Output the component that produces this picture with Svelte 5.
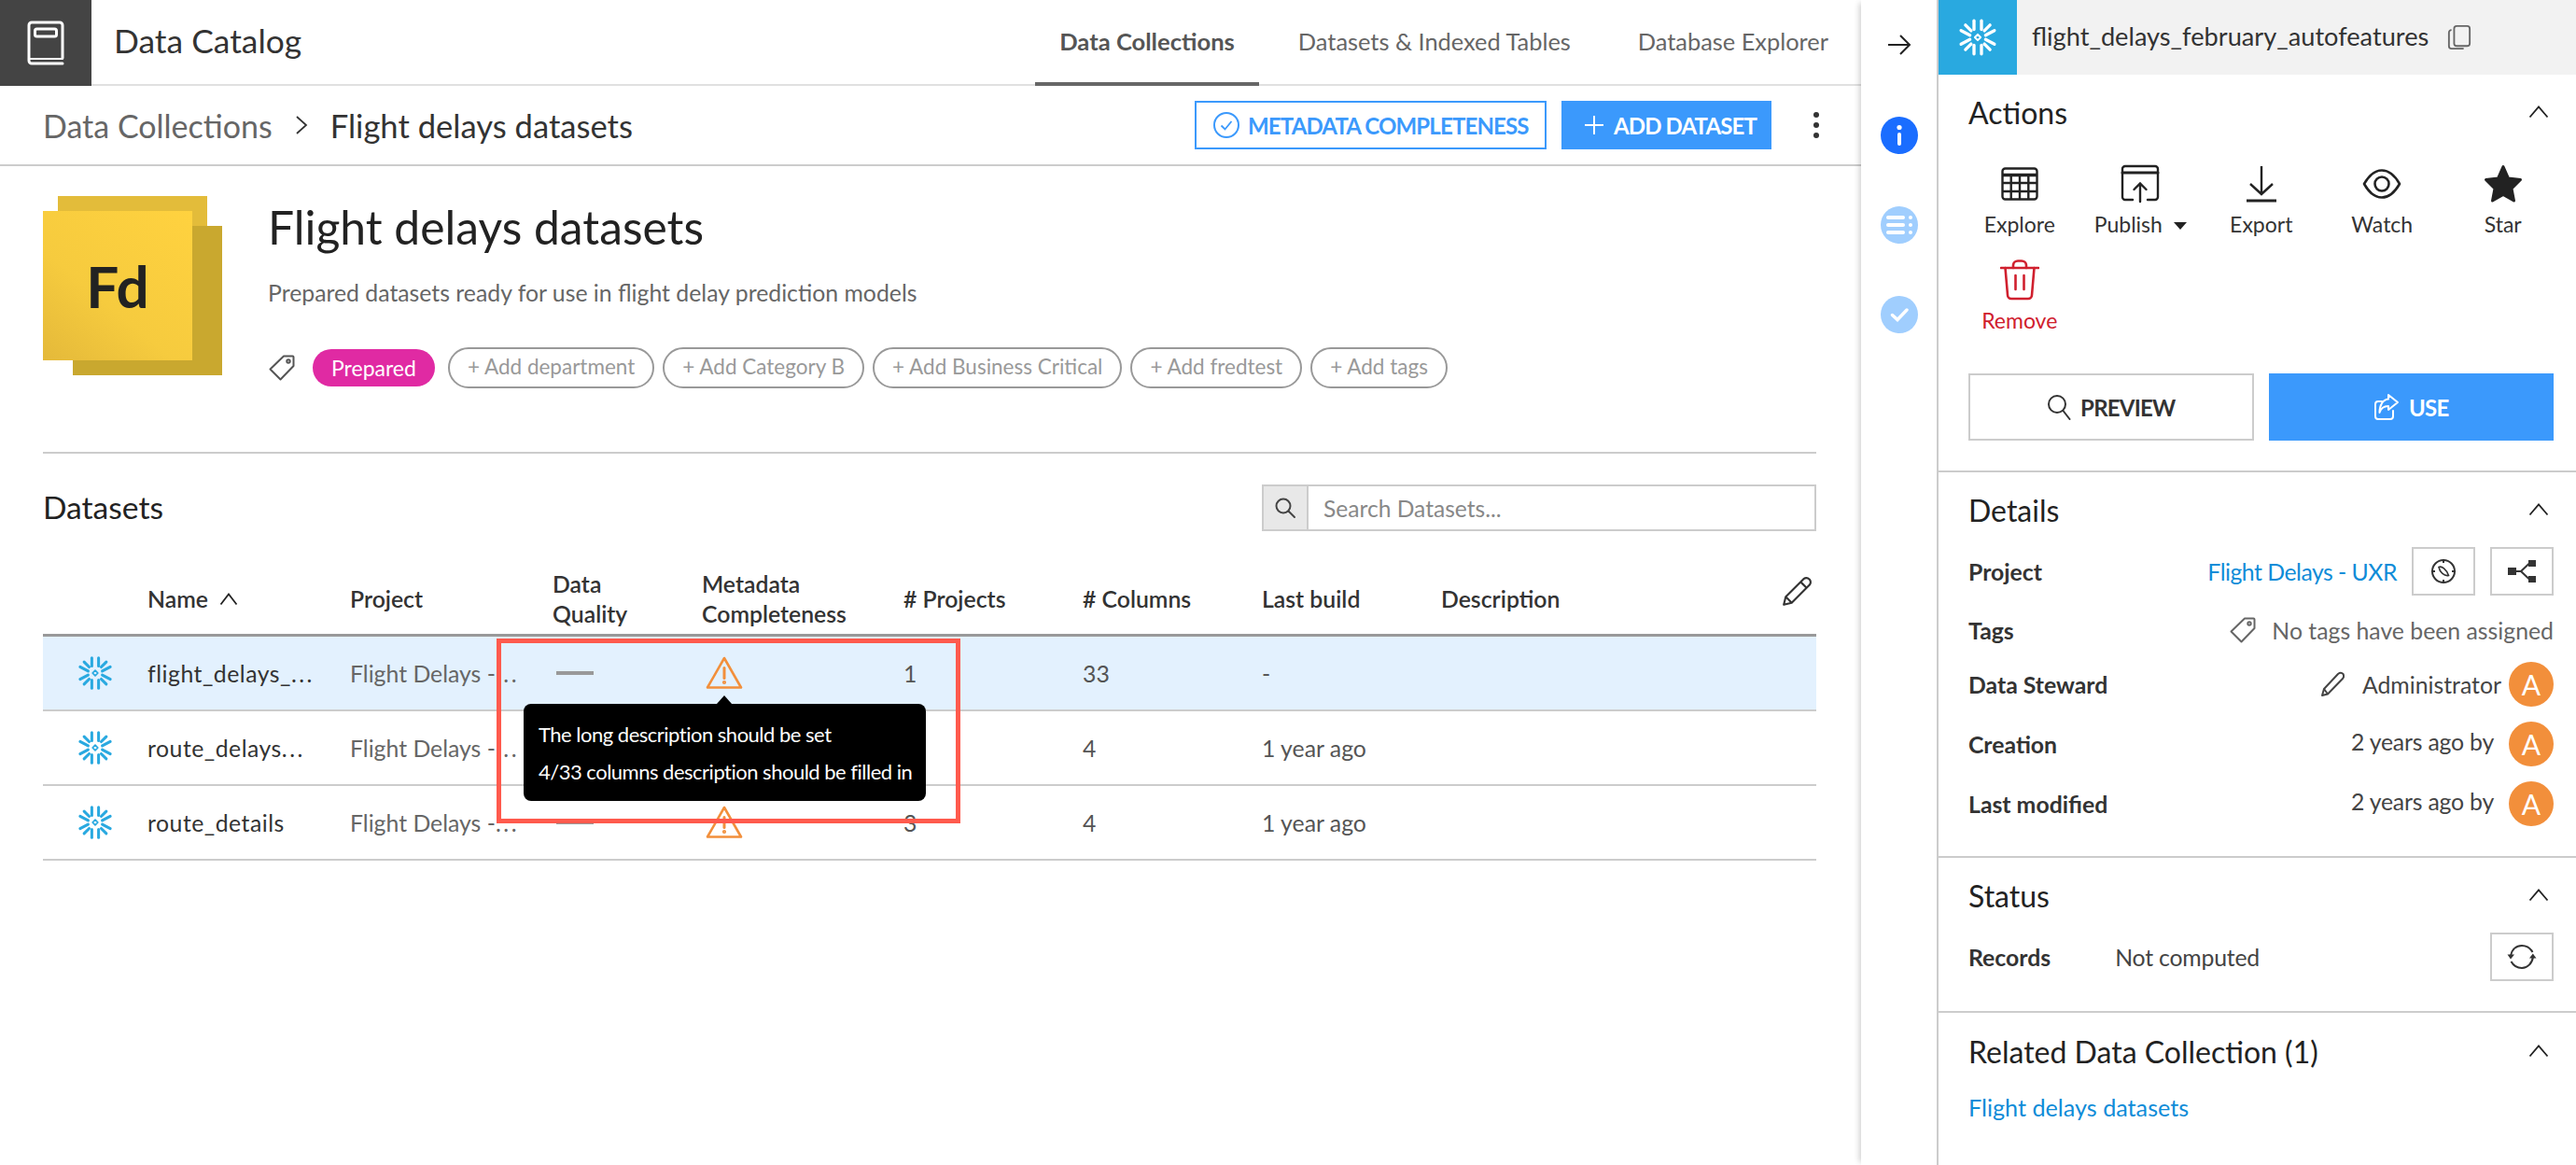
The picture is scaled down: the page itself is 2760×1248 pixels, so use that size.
<script>
  const tags = ['+ Add department', '+ Add Category B', '+ Add Business Critical', '+ Add fredtest', '+ Add tags'];
  const rows = [
    { name: 'flight_delays_', dots: true, projects: '1', columns: '33', build: '-', active: true },
    { name: 'route_delays', dots: true, projects: '2', columns: '4', build: '1 year ago' },
    { name: 'route_details', projects: '3', columns: '4', build: '1 year ago' }
  ];
  const quads = ['scale(1 1)', 'scale(-1 1)', 'scale(1 -1)', 'scale(-1 -1)'];
</script>

{#snippet snow(size, color)}
  <svg class="snow" width={size} height={size} viewBox="-20 -20 40 40" fill="none" stroke={color} stroke-width="3.200" stroke-linecap="round" stroke-linejoin="round">
    {#each quads as q}
      <g transform={q}>
        <path d="M-3.800 -17V-8" />
        <path d="M-12.500 -12.500L-6.800 -6.800" />
        <path d="M-17 -7L-8 -2.200" />
      </g>
    {/each}
    <path d="M0 -3L3 0L0 3L-3 0Z" stroke-width="1.800" />
  </svg>
{/snippet}

{#snippet warn()}
  <svg class="warn" width="40" height="36" viewBox="0 0 40 36" fill="none" stroke="#f28f3b" stroke-width="2.600" stroke-linejoin="round" stroke-linecap="round">
    <path d="M20 2L38 33.500H2Z" />
    <path d="M20 12.500V23.500" stroke-width="3" />
    <circle cx="20" cy="28" r="0.800" fill="#f28f3b" />
  </svg>
{/snippet}

{#snippet chevron()}
  <svg class="chev" width="22" height="14" viewBox="0 0 22 14" fill="none" stroke="#222" stroke-width="1.800"><path d="M1.500 12.500L11 1.500L20.500 12.500" /></svg>
{/snippet}

{#snippet tag(color)}
  <svg width="30" height="30" viewBox="0 0 30 30" fill="none" stroke={color} stroke-width="2" stroke-linejoin="round">
    <path d="M17 2.500H26.500a1 1 0 0 1 1 1V13L13.500 27.500L2.500 16.500Z" />
    <circle cx="22" cy="8" r="1.700" />
  </svg>
{/snippet}

{#snippet avatar()}
  <span class="avatar">A</span>
{/snippet}

<div class="app">
  <main class="main">
    <header class="topbar">
      <div class="brand">
        <svg width="40" height="48" viewBox="0 0 40 48" fill="none" stroke="#fff" stroke-width="3" stroke-linecap="round">
          <path d="M38 40V5a3 3 0 0 0-3-3H5a3 3 0 0 0-3 3v38a3 3 0 0 0 3 3H38" />
          <path d="M2.500 41H38" stroke-width="2" />
          <rect x="8.500" y="9" width="23" height="8" rx="2" />
        </svg>
      </div>
      <h1 class="app-title">Data Catalog</h1>
      <nav class="tabs">
        <span class="tab on">Data Collections</span>
        <span class="tab">Datasets &amp; Indexed Tables</span>
        <span class="tab">Database Explorer</span>
      </nav>
    </header>

    <div class="crumbs">
      <span class="crumb-a">Data Collections</span>
      <svg class="crumb-sep" width="14" height="22" viewBox="0 0 14 22" fill="none" stroke="#333" stroke-width="1.800"><path d="M2 2L12 11L2 20" /></svg>
      <span class="crumb-b">Flight delays datasets</span>
      <button class="btn-outline">
        <svg width="30" height="30" viewBox="0 0 30 30" fill="none" stroke="#3b99fc" stroke-width="2"><circle cx="15" cy="15" r="13" /><path d="M9.500 15.500L13.500 19.500L20.500 11" stroke-width="1.800" /></svg>
        METADATA COMPLETENESS
      </button>
      <button class="btn-solid">
        <svg width="22" height="22" viewBox="0 0 22 22" stroke="#fff" stroke-width="2"><path d="M11 1V21M1 11H21" /></svg>
        ADD DATASET
      </button>
      <span class="kebab"><i></i><i></i><i></i></span>
    </div>

    <section class="collection">
      <div class="cover">
        <div class="sheet sheet-back"></div>
        <div class="sheet sheet-low"></div>
        <div class="sheet sheet-front">Fd</div>
      </div>
      <div class="info">
        <h2 class="col-title">Flight delays datasets</h2>
        <p class="col-desc">Prepared datasets ready for use in flight delay prediction models</p>
        <div class="tags">
          {@render tag('#555')}
          <span class="pill">Prepared</span>
          {#each tags as t}
            <span class="add">{t}</span>
          {/each}
        </div>
      </div>
    </section>

    <div class="ds-bar">
      <h3 class="ds-title">Datasets</h3>
      <div class="search">
        <span class="search-addon">
          <svg width="24" height="24" viewBox="0 0 24 24" fill="none" stroke="#444" stroke-width="2" stroke-linecap="round"><circle cx="10" cy="10" r="7.500" /><path d="M15.500 15.500L22 22" /></svg>
        </span>
        <span class="search-ph">Search Datasets...</span>
      </div>
    </div>

    <div class="table">
      <div class="grid head">
        <span></span>
        <span class="name-h">Name
          <svg width="20" height="14" viewBox="0 0 20 14" fill="none" stroke="#222" stroke-width="1.800"><path d="M1.500 12.500L10 1.500L18.500 12.500" /></svg>
        </span>
        <span>Project</span>
        <span>Data<br />Quality</span>
        <span>Metadata<br />Completeness</span>
        <span># Projects</span>
        <span># Columns</span>
        <span>Last build</span>
        <span>Description</span>
        <svg class="edit" width="34" height="34" viewBox="0 0 32 32" fill="none" stroke="#333" stroke-width="2" stroke-linejoin="round"><path d="M3 29L5 21L23 3C25 1.500 27 1.500 29 3.500C30.500 5.500 30.500 7 29 9L11 27Z" /><path d="M5 21L11 27M20 6L26 12" /></svg>
      </div>
      {#each rows as r}
        <div class="grid row" class:active={r.active}>
          <span class="cell-icon">{@render snow(38, '#29a9e0')}</span>
          <span class="c-name">{r.name}{#if r.dots}<span class="dots">...</span>{/if}</span>
          <span class="c-proj">Flight Delays -<span class="dots">...</span></span>
          <span><i class="dash"></i></span>
          <span class="c-warn">{@render warn()}</span>
          <span class="c-num">{r.projects}</span>
          <span class="c-num">{r.columns}</span>
          <span class="c-num">{r.build}</span>
          <span></span>
        </div>
      {/each}
      <div class="tip">
        <p>The long description should be set</p>
        <p>4/33 columns description should be filled in</p>
      </div>
      <div class="annot"></div>
    </div>
  </main>

  <aside class="rail">
    <svg class="rail-arrow" width="26" height="24" viewBox="0 0 26 24" fill="none" stroke="#222" stroke-width="2"><path d="M1 12H24M14 2L24 12L14 22" /></svg>
    <span class="dot dot-on">
      <svg width="40" height="40" viewBox="0 0 40 40" fill="#fff"><circle cx="20" cy="11.500" r="2.600" /><rect x="18" y="17" width="4" height="14" rx="2" /></svg>
    </span>
    <span class="dot">
      <svg width="40" height="40" viewBox="0 0 40 40" fill="#fff"><rect x="6" y="10" width="20" height="4" rx="2" /><rect x="6" y="18" width="20" height="4" rx="2" /><rect x="6" y="26" width="20" height="4" rx="2" /><circle cx="32" cy="12" r="2" /><circle cx="32" cy="20" r="2" /><circle cx="32" cy="28" r="2" /></svg>
    </span>
    <span class="dot">
      <svg width="40" height="40" viewBox="0 0 40 40" fill="none" stroke="#fff" stroke-width="3.400" stroke-linecap="round"><path d="M12.500 20.500L18 25.500L28 15" /></svg>
    </span>
  </aside>

  <aside class="panel">
    <div class="p-head">
      <span class="p-logo">{@render snow(42, '#fff')}</span>
      <span class="p-name">flight_delays_february_autofeatures</span>
      <svg class="p-copy" width="26" height="30" viewBox="0 0 28 30" fill="none" stroke="#666" stroke-width="2"><rect x="8" y="2" width="18" height="23" rx="3" /><path d="M5 6.500a3 3 0 0 0-3 3V25a3 3 0 0 0 3 3H19" /></svg>
    </div>

    <section class="p-sec sec-actions">
      <div class="p-title"><span>Actions</span>{@render chevron()}</div>
      <div class="actions">
        <div class="act">
          <svg width="40" height="36" viewBox="0 0 40 36" fill="none" stroke="#222" stroke-width="2.400"><rect x="1.500" y="1.500" width="37" height="33" rx="3" /><path d="M1.500 8.500H38.500" stroke-width="3.500" /><path d="M1.500 17H38.500M1.500 26H38.500M10.700 8V35M20 8V35M29.300 8V35" /></svg>
          <span>Explore</span>
        </div>
        <div class="act">
          <svg width="42" height="42" viewBox="0 0 42 42" fill="none" stroke="#222" stroke-width="2.400" stroke-linecap="round"><path d="M13 38H5a3 3 0 0 1-3-3V5a3 3 0 0 1 3-3H37a3 3 0 0 1 3 3V35a3 3 0 0 1-3 3H29" /><path d="M2 9H40" stroke-width="3" /><path d="M21 40V21M14.500 27L21 20.500L27.500 27" /></svg>
          <span>Publish <i class="caret"></i></span>
        </div>
        <div class="act">
          <svg width="34" height="40" viewBox="0 0 34 40" fill="none" stroke="#222" stroke-width="2.400"><path d="M17 1V31M5 20L17 31L29 20" /><path d="M1 38H33" stroke-width="3" /></svg>
          <span>Export</span>
        </div>
        <div class="act">
          <svg width="42" height="32" viewBox="0 0 42 32" fill="none" stroke="#222" stroke-width="2.600" stroke-linejoin="round"><path d="M21 1.500C29 1.500 36 9 40 16C36 23 29 30.500 21 30.500C13 30.500 6 23 2 16C6 9 13 1.500 21 1.500Z" /><circle cx="21" cy="16" r="7.500" /></svg>
          <span>Watch</span>
        </div>
        <div class="act">
          <svg width="42" height="42" viewBox="0 0 42 42" fill="#222" stroke="#222" stroke-width="3" stroke-linejoin="round"><path d="M21 2.500L26.500 15L39.500 16.500L30 26L32.500 39L21 32.500L9.500 39L12 26L2.500 16.500L15.500 15Z" /></svg>
          <span>Star</span>
        </div>
        <div class="act act-red">
          <svg width="42" height="44" viewBox="0 0 42 44" fill="none" stroke="#d0202e" stroke-width="2.600" stroke-linecap="round" stroke-linejoin="round"><path d="M1 9H41" /><path d="M14 9V6a5 5 0 0 1 5-4.500h4A5 5 0 0 1 28 6V9" /><path d="M5.500 9L8 38a4 4 0 0 0 4 4H30a4 4 0 0 0 4-4L36.500 9" /><path d="M16.500 17V32M25.500 17V32" /></svg>
          <span>Remove</span>
        </div>
      </div>
      <div class="cta">
        <button class="cta-ghost">
          <svg width="26" height="28" viewBox="0 0 26 28" fill="none" stroke="#333" stroke-width="2" stroke-linecap="round"><circle cx="11" cy="11" r="9" /><path d="M17.500 18L24.500 27" /></svg>
          PREVIEW
        </button>
        <button class="cta-solid">
          <svg width="28" height="30" viewBox="0 0 28 30" fill="none" stroke="#fff" stroke-width="2" stroke-linejoin="round" stroke-linecap="round"><path d="M21 19V25a3 3 0 0 1-3 3H5a3 3 0 0 1-3-3V12a3 3 0 0 1 3-3H9" /><path d="M16 2L26 10L16 18V14C11 14 8 16 6.500 21C6.500 13 10 7 16 6.500Z" /></svg>
          USE
        </button>
      </div>
    </section>

    <section class="p-sec sec-details">
      <div class="p-title"><span>Details</span>{@render chevron()}</div>
      <div class="det det-project">
        <b>Project</b>
        <span class="link link-tight">Flight Delays - UXR</span>
        <span class="sq">
          <svg width="28" height="28" viewBox="0 0 28 28" fill="none" stroke="#333" stroke-width="2"><circle cx="14" cy="14" r="12" /><path d="M9 9.500C12 8 17 11.500 19.500 18.500C15 19.500 10 15 9 9.500Z" stroke-width="1.600" /><path d="M14 1V5M14 23V27M1 14H5M23 14H27" /></svg>
        </span>
        <span class="sq">
          <svg width="30" height="24" viewBox="0 0 30 24" fill="#333" stroke="#333" stroke-width="2"><rect x="1" y="9" width="7" height="6" /><rect x="23" y="1" width="6" height="5" /><rect x="23" y="18" width="6" height="5" /><path d="M8 12H14L23 3.500M14 12L23 20.500" fill="none" /></svg>
        </span>
      </div>
      <div class="det det-tags">
        <b>Tags</b>
        <span class="muted-row">{@render tag('#666')}<span class="muted">No tags have been assigned</span></span>
      </div>
      <div class="det">
        <b>Data Steward</b>
        <span class="steward">
          <svg width="26" height="28" viewBox="0 0 26 28" fill="none" stroke="#444" stroke-width="2" stroke-linejoin="round"><path d="M2 26L4 19L19 3C21 1.500 23 1.500 24.500 3C25.500 5 25.500 6.500 24 8L8 24.500Z" /><path d="M4 19L8 24.500" /></svg>
          <span class="val">Administrator</span>
          {@render avatar()}
        </span>
      </div>
      <div class="det">
        <b>Creation</b>
        <span class="byline"><span class="val up">2 years ago by</span>{@render avatar()}</span>
      </div>
      <div class="det">
        <b>Last modified</b>
        <span class="byline"><span class="val up">2 years ago by</span>{@render avatar()}</span>
      </div>
    </section>

    <section class="p-sec sec-status">
      <div class="p-title"><span>Status</span>{@render chevron()}</div>
      <div class="det det-status">
        <b>Records</b>
        <span class="val status-val">Not computed</span>
        <span class="sq">
          <svg width="32" height="28" viewBox="0 0 32 28" fill="none" stroke="#333" stroke-width="2" stroke-linejoin="round"><path d="M4 13C5 6 10 2 16 2C21 2 25 4.500 27.500 9" /><path d="M28 14C27 21 22 26 16 26C11 26 7 23.500 4.500 19" /><path d="M0.500 11.500H8L4 16.500Z" fill="#333" stroke="none" /><path d="M24 15.500H31.500L27.800 10.500Z" fill="#333" stroke="none" /></svg>
        </span>
      </div>
    </section>

    <section class="p-sec sec-related">
      <div class="p-title"><span>Related Data Collection (1)</span>{@render chevron()}</div>
      <div class="link rel-link">Flight delays datasets</div>
    </section>
  </aside>
</div>

<style>
  :global(body) {
    margin: 0;
    background: #fff;
    color: #222;
    font-family: "Lato", "Noto Sans", sans-serif;
  }
  h1, h2, h3, p { margin: 0; font-weight: 400; }
  button { font-family: inherit; cursor: pointer; border-radius: 0; }
  svg { flex: none; }

  .app { display: flex; width: 2760px; height: 1248px; overflow: hidden; }
  .main { width: 1994px; flex: none; }

  .topbar { height: 92px; display: flex; align-items: center; box-sizing: border-box; border-bottom: 2px solid #e0e0e0; }
  .brand { width: 98px; height: 92px; background: #444; display: flex; align-items: center; justify-content: center; flex: none; align-self: flex-start; }
  .app-title { font-size: 35.400px; color: #333; margin-left: 24px; margin-top: -4px; }
  .tabs { margin-left: auto; display: flex; height: 92px; margin-right: 35px; align-self: flex-start; }
  .tab { font-size: 25.400px; color: #666; display: flex; align-items: center; margin-left: 72px; height: 92px; box-sizing: border-box; padding-bottom: 4px; white-space: nowrap; }
  .tab:nth-child(2) { margin-left: 42px; }
  .tab.on { font-size: 25.600px; font-weight: 700; color: #555; border-bottom: 4px solid #666; padding: 0 26px; margin-left: 0; }

  .crumbs { height: 86px; box-sizing: border-box; border-bottom: 2px solid #ccc; display: flex; align-items: center; padding: 0 0 0 46px; font-size: 34px; }
  .crumb-a { color: #666; }
  .crumb-sep { margin: 0 24px 0 24px; }
  .crumb-b { color: #333; font-size: 34.600px; }
  .btn-outline, .btn-solid { height: 52px; box-sizing: border-box; font-size: 24px; letter-spacing: -0.850px; font-weight: 700; display: flex; align-items: center; gap: 8px; white-space: nowrap; }
  .btn-outline { margin-left: auto; width: 377px; border: 2px solid #3b99fc; background: #fff; color: #3b99fc; padding: 0 0 0 17px; }
  .btn-solid { margin-left: 16px; width: 225px; border: 0; background: #3b99fc; color: #fff; padding: 0 0 0 24px; gap: 10px; }
  .kebab { width: 96px; display: flex; flex-direction: column; align-items: center; gap: 5px; }
  .kebab i { width: 6px; height: 6px; border-radius: 50%; background: #333; }

  .collection { height: 308px; box-sizing: border-box; margin: 0 48px 0 46px; border-bottom: 2px solid #ccc; padding-top: 32px; display: flex; }
  .cover { position: relative; width: 192px; height: 192px; flex: none; }
  .sheet { position: absolute; width: 160px; height: 160px; }
  .sheet-back { left: 16px; top: 0; background: #e3bc3a; }
  .sheet-low { left: 32px; top: 32px; background: #c9a82f; }
  .sheet-front { left: 0; top: 16px; background: linear-gradient(40deg, #e4b93a 0%, #f6cb3e 40%, #ffd23f 100%); display: flex; align-items: center; justify-content: center; font-size: 62px; font-weight: 700; color: #222; }
  .info { margin-left: 49px; }
  .col-title { font-size: 49.800px; color: #222; line-height: 64px; margin-top: 1px; }
  .col-desc { font-size: 24.800px; color: #666; line-height: 36px; margin-top: 21px; }
  .tags { display: flex; align-items: center; margin-top: 40px; gap: 9px; }
  .tags svg { margin-right: 9px; }
  .pill { background: #e02aa3; color: #fff; font-size: 23px; height: 40px; line-height: 40px; padding: 0 20px; border-radius: 20px; margin-right: 5px; }
  .add { height: 44px; box-sizing: border-box; border: 2px solid #999; border-radius: 22px; color: #999; font-size: 22.500px; line-height: 38px; padding: 0 19px; white-space: nowrap; }

  .ds-bar { display: flex; align-items: center; justify-content: space-between; margin: 33px 48px 0 46px; }
  .ds-title { font-size: 33.600px; color: #222; margin-top: -2px; }
  .search { width: 594px; height: 50px; box-sizing: border-box; border: 2px solid #ccc; display: flex; align-items: center; }
  .search-addon { width: 46px; height: 46px; background: #e8e8e8; border-right: 2px solid #ccc; display: flex; align-items: center; justify-content: center; }
  .search-ph { margin-left: 16px; font-size: 24.600px; color: #888; }

  .table { position: relative; margin: 36px 48px 0 46px; }
  .grid { display: grid; grid-template-columns: 112px 217px 217px 160px 216px 192px 192px 192px 1fr; align-items: center; font-size: 24.800px; }
  .head { height: 74px; border-bottom: 3px solid #999; font-weight: 600; color: #333; line-height: 32px; position: relative; }
  .name-h { display: flex; align-items: center; gap: 12px; }
  .edit { position: absolute; right: 4px; top: 12px; }
  .row { height: 80px; box-sizing: border-box; border-bottom: 2px solid #ccc; }
  .row.active { background: #e3f1fe; }
  .cell-icon { display: flex; justify-content: center; width: 112px; }
  .c-name { color: #333; letter-spacing: 0.500px; white-space: nowrap; }
  .c-proj { color: #666; white-space: nowrap; }
  .dots { letter-spacing: 2.500px; }
  .c-num { color: #555; }
  .dash { display: block; width: 40px; height: 4px; background: #999; margin-left: 4px; }
  .c-warn { display: flex; padding-left: 4px; }
  .tip { position: absolute; left: 515px; top: 149px; width: 431px; height: 104px; box-sizing: border-box; padding: 13px 0 0 16px; background: #000; border-radius: 8px; color: #fff; font-size: 22px; letter-spacing: -0.500px; line-height: 40px; white-space: nowrap; }
  .tip::before { content: ""; position: absolute; left: 207px; top: -9px; border: 8px solid transparent; border-top: 0; border-bottom: 9px solid #000; }
  .annot { position: absolute; left: 486px; top: 79px; width: 497px; height: 198px; box-sizing: border-box; border: 5px solid #ff5a4d; }

  .rail { width: 81px; flex: none; box-shadow: -5px 0 6px -3px rgba(0, 0, 0, 0.18); position: relative; display: flex; flex-direction: column; align-items: center; padding-top: 36px; box-sizing: border-box; }
  .rail-arrow { margin-bottom: 65px; }
  .dot { width: 40px; height: 40px; border-radius: 50%; background: #a0cefe; margin-bottom: 56px; display: block; }
  .dot-on { background: #1a6dff; }
  .dot svg { display: block; }

  .panel { width: 685px; flex: none; border-left: 2px solid #ccc; box-sizing: border-box; }
  .p-head { height: 80px; background: #f2f2f2; display: flex; align-items: center; }
  .p-logo { width: 84px; height: 80px; background: #29a9e0; display: flex; align-items: center; justify-content: center; flex: none; }
  .p-name { font-size: 27.200px; color: #333; margin-left: 16px; margin-top: -4px; }
  .p-copy { margin-left: 20px; }

  .p-sec { padding: 21px 24px 32px 32px; border-bottom: 2px solid #ccc; }
  .sec-related { border-bottom: 0; padding-top: 22px; }
  .p-title { display: flex; align-items: center; justify-content: space-between; height: 40px; box-sizing: border-box; padding-bottom: 2px; font-size: 32px; color: #222; }
  .p-title :global(.chev) { margin-right: 5px; }
  .actions { display: grid; grid-template-columns: repeat(5, 129.500px); margin: 34px 0 0 -10px; row-gap: 23px; }
  .act { display: flex; flex-direction: column; align-items: center; font-size: 23px; color: #333; height: 80px; }
  .act svg { height: 44px; flex: none; }
  .act span { height: 30px; line-height: 30px; margin-top: 6px; white-space: nowrap; }
  .act-red { color: #d0202e; }
  .caret { display: inline-block; border: 7px solid transparent; border-top: 8px solid #222; border-bottom: 0; margin-left: 6px; vertical-align: 3px; }
  .cta { display: flex; gap: 16px; margin-top: 42px; }
  .cta button { width: 306px; height: 72px; box-sizing: border-box; font-size: 24px; letter-spacing: -0.800px; font-weight: 700; display: flex; align-items: center; justify-content: center; gap: 10px; }
  .cta-ghost { border: 2px solid #ccc; background: #fff; color: #333; }
  .cta-solid { border: 0; background: #3b99fc; color: #fff; }

  .det { display: flex; align-items: center; justify-content: space-between; font-size: 24.800px; min-height: 48px; margin-top: 16px; color: #444; }
  .det b { color: #333; font-weight: 700; }
  .det-project { margin-top: 19px; height: 52px; justify-content: flex-start; }
  .det-project b { margin-right: auto; }
  .link { color: #0f8cd8; }
  .link-tight { letter-spacing: -0.500px; }
  .sq { width: 68px; height: 52px; box-sizing: border-box; border: 2px solid #ccc; display: flex; align-items: center; justify-content: center; margin-left: 16px; flex: none; }
  .det-tags { min-height: 36px; margin-top: 19px; }
  .muted-row { display: flex; align-items: center; gap: 16px; }
  .muted { color: #666; }
  .steward { display: flex; align-items: center; }
  .steward svg { margin-right: 19px; }
  .steward .val { margin-right: 8px; }
  .byline { display: flex; align-items: center; gap: 16px; }
  .up { padding-bottom: 5px; letter-spacing: -0.200px; }
  .avatar { width: 48px; height: 48px; border-radius: 50%; background: #f28f3b; color: #fff; display: flex; align-items: center; justify-content: center; font-size: 30px; flex: none; }
  .det-status { margin-top: 19px; height: 52px; justify-content: flex-start; }
  .status-val { margin-left: 69px; margin-right: auto; letter-spacing: -0.200px; }
  .rel-link { font-size: 25.200px; height: 36px; line-height: 36px; margin-top: 21px; }
</style>
